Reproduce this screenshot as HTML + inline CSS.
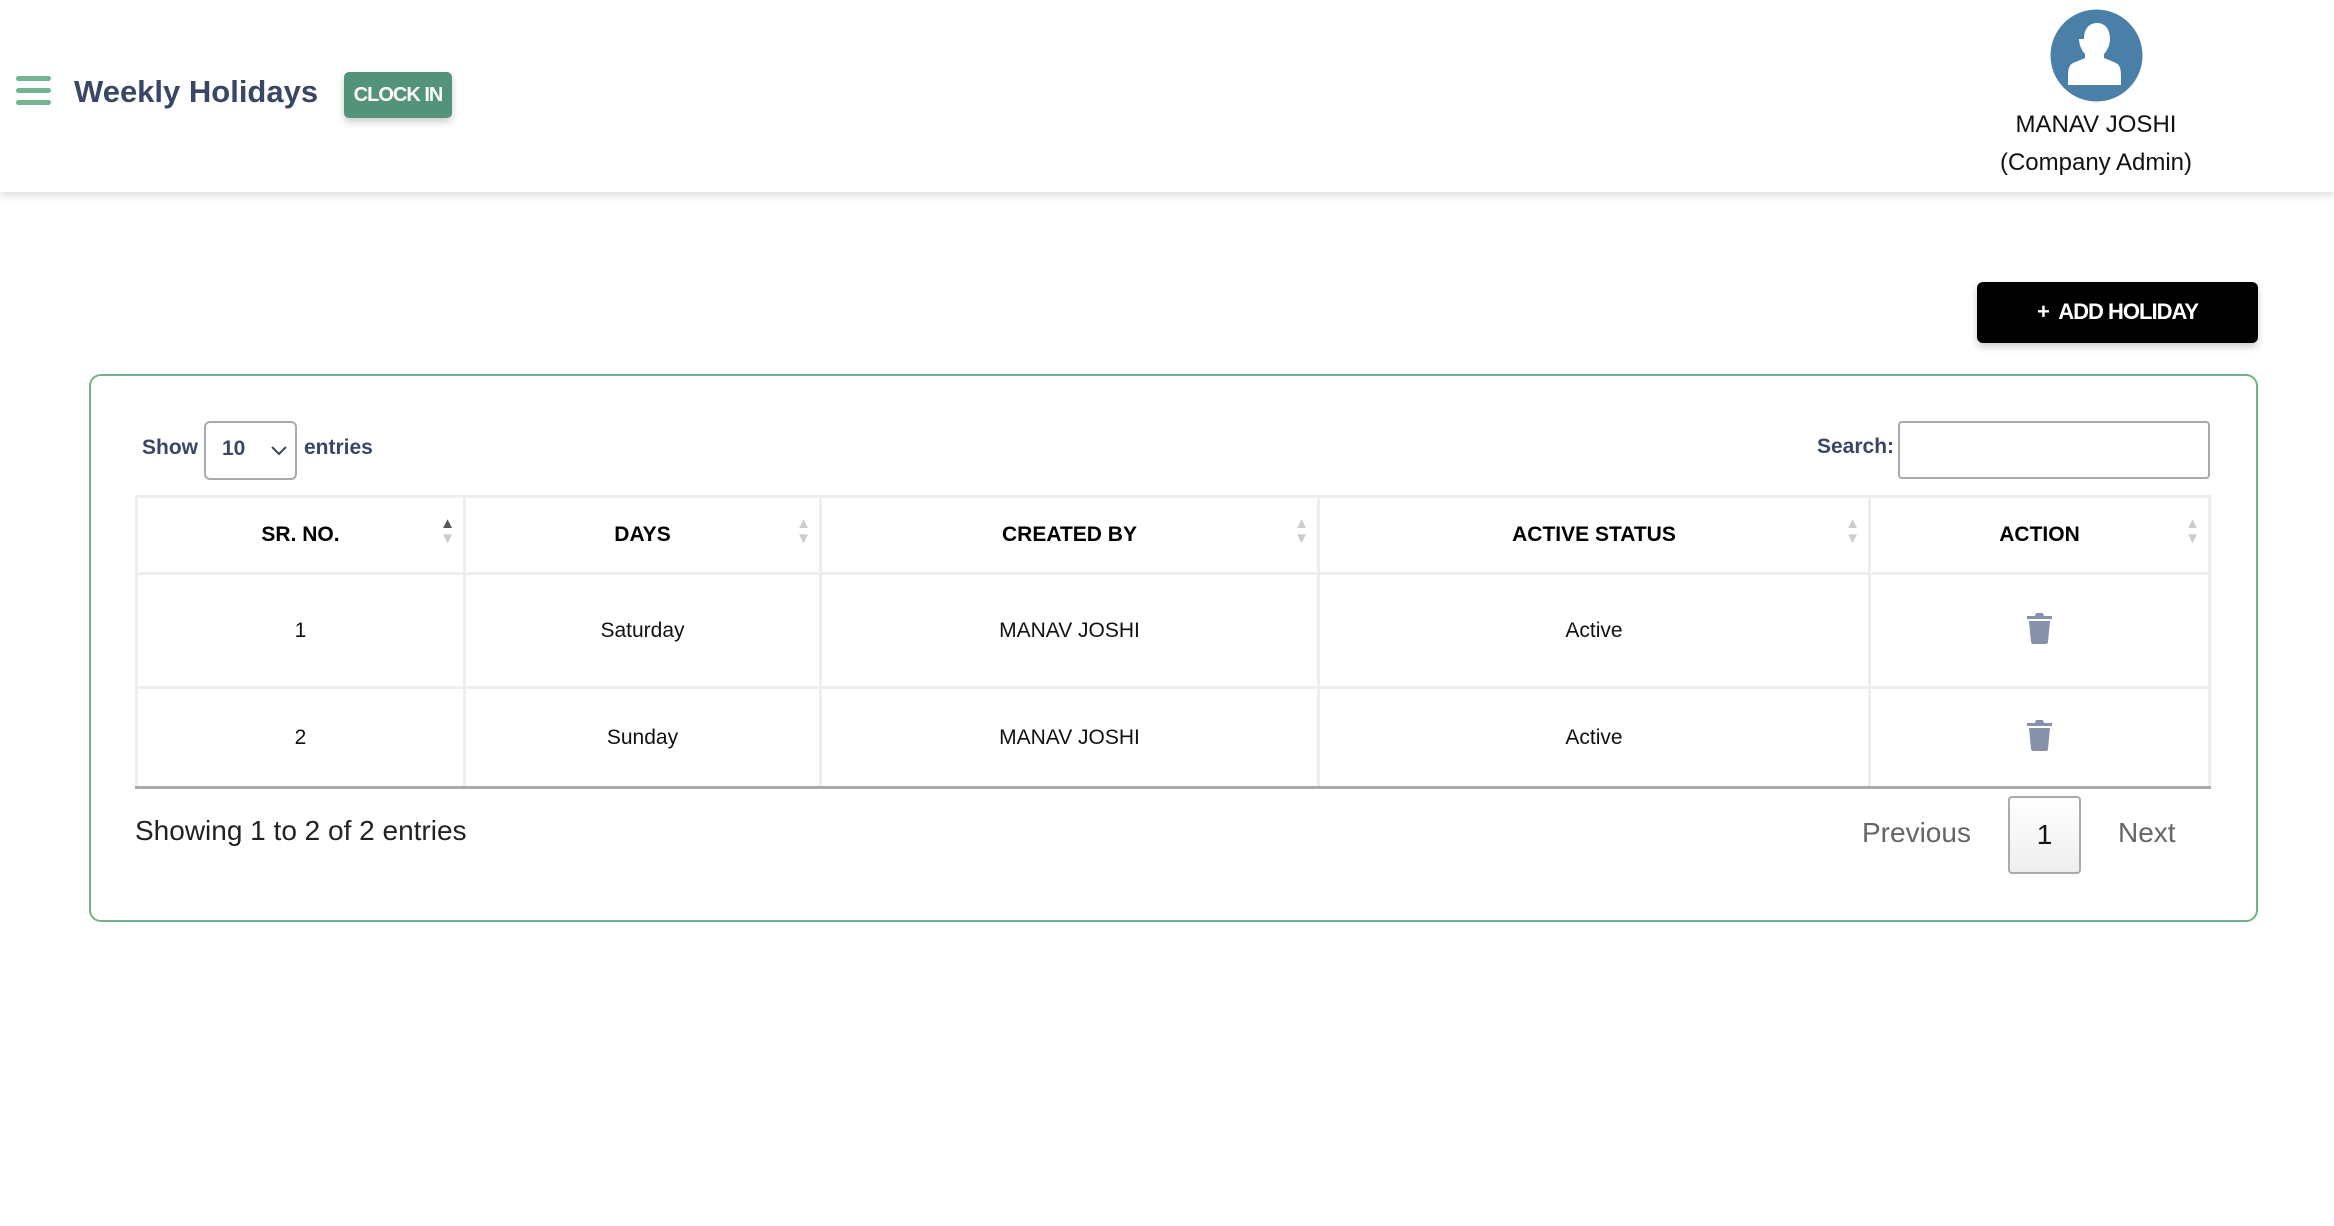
<!DOCTYPE html>
<html><head><meta charset="utf-8"><style>
*{box-sizing:border-box;margin:0;padding:0}
body{width:2334px;height:1226px;background:#fff;font-family:"Liberation Sans",sans-serif;position:relative;overflow:hidden}
.a{position:absolute}
.hdr{left:0;top:0;width:2334px;height:192px;background:#fff;box-shadow:0 3px 8px rgba(0,0,0,.15)}
.bar{left:16px;width:35px;height:5px;border-radius:3px;background:#72b590}
th,td{border:3px solid #eee;text-align:center}
table{border-collapse:collapse;position:absolute;left:135px;top:495px;width:2076px}
th{height:77px;font-size:21px;font-weight:bold;color:#000;position:relative}
td{font-size:21px;color:#111}
tr.last td{border-bottom:3px solid #aaa}
.s{position:absolute;right:8px;top:18px;font-size:15px;line-height:15px;color:#ccc}
</style></head><body>
<div class="a hdr"></div>
<div class="a bar" style="top:76px"></div>
<div class="a bar" style="top:88px"></div>
<div class="a bar" style="top:100px"></div>
<div class="a" style="left:74px;top:74px;font-size:31px;font-weight:bold;color:#3a4666">Weekly Holidays</div>
<div class="a" style="left:344px;top:72px;width:108px;height:46px;background:#52937a;border-radius:5px;color:#fff;font-weight:bold;font-size:20px;line-height:46px;text-align:center;letter-spacing:-1px;box-shadow:0 4px 8px rgba(0,0,0,.2)">CLOCK IN</div>
<svg class="a" style="left:2050px;top:9px" width="93" height="93" viewBox="0 0 93 93"><circle cx="46.5" cy="46.5" r="46" fill="#4a7fa8"/><path d="M34 30c0-10 5-16 13-16s13 6 13 16c0 6-3 12-6 15v4l12 5c4 2 5 6 5 14v8H18v-8c0-8 1-12 5-14l12-5v-4c-3-3-6-9-6-15z" fill="#fff"/></svg>
<div class="a" style="left:1950px;top:106px;width:292px;text-align:center;font-size:24px;color:#111;line-height:38px">MANAV JOSHI<br>(Company Admin)</div>
<div class="a" style="left:1977px;top:282px;width:281px;height:61px;background:#000;border-radius:6px;color:#fff;font-weight:bold;font-size:22px;line-height:59px;text-align:center;letter-spacing:-1px;box-shadow:0 4px 8px rgba(0,0,0,.2)">+&nbsp; ADD HOLIDAY</div>
<div class="a" style="left:89px;top:374px;width:2169px;height:548px;border:2px solid #6fb38a;border-radius:12px"></div>
<div class="a" style="left:142px;top:436px;font-size:21px;font-weight:bold;color:#3a4666">Show</div>
<div class="a" style="left:204px;top:421px;width:93px;height:59px;border:2px solid #aaa;border-radius:6px;font-size:21px;color:#3a4666;font-weight:bold;padding:14px 0 0 16px">10<svg class="a" style="left:64px;top:22px" width="18" height="12"><path d="M2 2l7 7 7-7" stroke="#3a4666" stroke-width="2" fill="none"/></svg></div>
<div class="a" style="left:304px;top:436px;font-size:21px;font-weight:bold;color:#3a4666">entries</div>
<div class="a" style="left:1817px;top:435px;font-size:21px;font-weight:bold;color:#3a4666">Search:</div>
<div class="a" style="left:1898px;top:421px;width:312px;height:58px;border:2px solid #aaa;border-radius:4px"></div>
<table>
<tr><th style="width:328px">SR. NO.<span class="s"><span style="color:#555">▲</span><br>▼</span></th><th style="width:356px">DAYS<span class="s">▲<br>▼</span></th><th style="width:498px">CREATED BY<span class="s">▲<br>▼</span></th><th style="width:551px">ACTIVE STATUS<span class="s">▲<br>▼</span></th><th>ACTION<span class="s">▲<br>▼</span></th></tr>
<tr style="height:114px"><td>1</td><td>Saturday</td><td>MANAV JOSHI</td><td>Active</td><td><svg width="27" height="32" viewBox="0 0 27 32"><path d="M1 4h8l1-3h7l1 3h8v3H1zM3 9h21l-2 21c0 1-1 2-2 2H7c-1 0-2-1-2-2z" fill="#8891aa"/></svg></td></tr>
<tr class="last" style="height:100px"><td>2</td><td>Sunday</td><td>MANAV JOSHI</td><td>Active</td><td><svg width="27" height="32" viewBox="0 0 27 32"><path d="M1 4h8l1-3h7l1 3h8v3H1zM3 9h21l-2 21c0 1-1 2-2 2H7c-1 0-2-1-2-2z" fill="#8891aa"/></svg></td></tr>
</table>
<div class="a" style="left:135px;top:815px;font-size:28px;color:#222">Showing 1 to 2 of 2 entries</div>
<div class="a" style="left:1862px;top:817px;font-size:28px;color:#666">Previous</div>
<div class="a" style="left:2008px;top:796px;width:73px;height:78px;border:2px solid #aaa;border-radius:4px;background:linear-gradient(#fff,#eee);font-size:28px;text-align:center;line-height:74px;color:#111">1</div>
<div class="a" style="left:2118px;top:817px;font-size:28px;color:#666">Next</div>
</body></html>
